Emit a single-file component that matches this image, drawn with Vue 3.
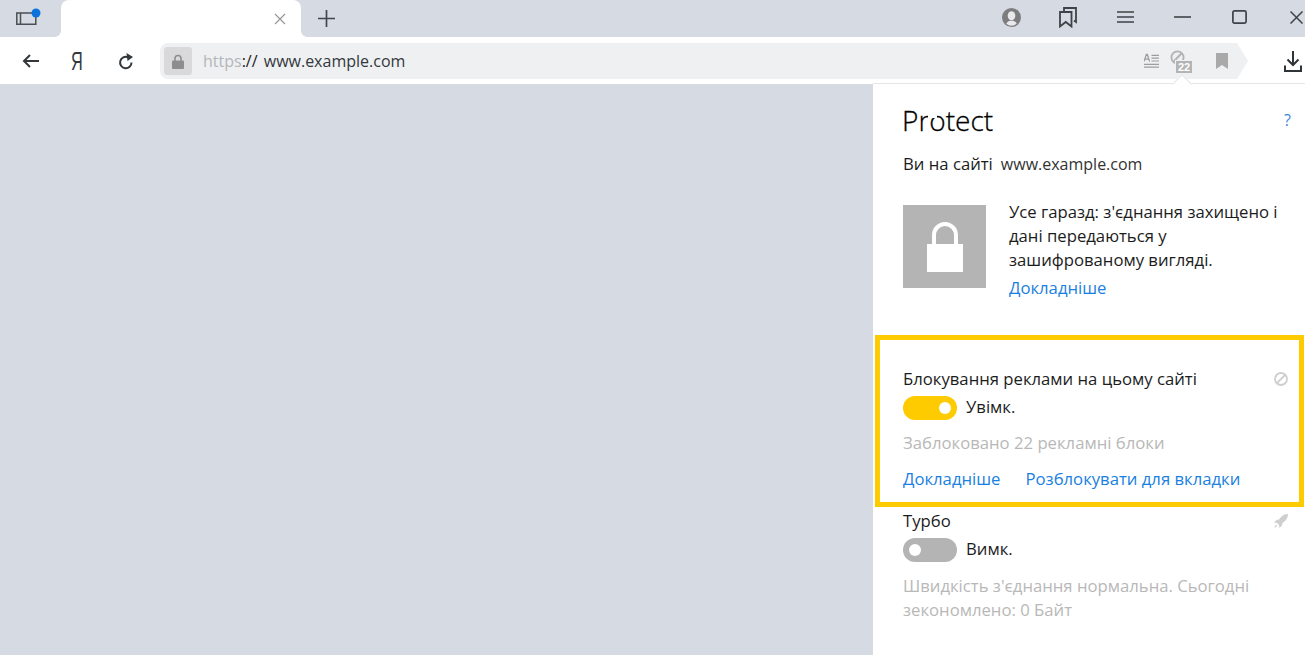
<script setup>
const btnColor = '#4a4f54'
</script>

<template>
  <div class="page">
    <header class="tabbar">
      <button class="tb sidebar" aria-label="sidebar">
        <svg width="26" height="20" viewBox="0 0 26 20"><path d="M1.800 5h19v11.200h-19zM5.500 5v11.200" fill="none" :stroke="btnColor" stroke-width="1.500"/><circle cx="21" cy="5" r="4.500" fill="#0a74dc"/></svg>
      </button>
      <div class="tab">
        <svg class="tab-x" width="12" height="12" viewBox="0 0 12 12"><path d="M1 1l10 10M11 1L1 11" stroke="#9a9a9a" stroke-width="1.300"/></svg>
      </div>
      <button class="tb plus" aria-label="new tab">
        <svg width="17" height="17" viewBox="0 0 17 17"><path d="M8.500 0v17M0 8.500h17" stroke="#42474d" stroke-width="1.700"/></svg>
      </button>
      <div class="spacer"></div>
      <div class="win">
        <svg class="w1" width="19" height="19" viewBox="0 0 20 20"><circle cx="10" cy="10" r="10" fill="#7d7d7f"/><ellipse cx="10" cy="8.200" rx="4" ry="4.800" fill="#e8e9ec"/><path d="M4.500 16.500c1-2.500 3.500-3 5.500-3s4.500.5 5.500 3a9 9 0 0 1-11 0z" fill="#e8e9ec"/></svg>
        <svg class="w2" width="18" height="21" viewBox="0 0 18 21"><path d="M5 4V1h12v14l-2-1.500" fill="none" stroke="#3e4347" stroke-width="1.800"/><path d="M1 5h11.500v14.500L6.750 15 1 19.500z" fill="none" stroke="#3e4347" stroke-width="1.800"/></svg>
        <svg class="w3" width="17" height="12" viewBox="0 0 17 12"><path d="M0 1h17M0 6h17M0 11h17" stroke="#3e4347" stroke-width="1.600"/></svg>
        <svg class="w4" width="17" height="2" viewBox="0 0 17 2"><path d="M0 1h17" stroke="#3e4347" stroke-width="1.600"/></svg>
        <svg class="w5" width="15" height="14" viewBox="0 0 15 14"><rect x=".900" y=".900" width="13.200" height="12.200" rx="1.500" fill="none" stroke="#3e4347" stroke-width="1.700"/></svg>
        <svg class="w6" width="13" height="13" viewBox="0 0 13 13"><path d="M.5.5l12 12M12.500.5l-12 12" stroke="#3e4347" stroke-width="1.500"/></svg>
      </div>
    </header>

    <nav class="toolbar">
      <svg class="back" width="17" height="14" viewBox="0 0 17 14"><path d="M17 7H2M8 1L2 7l6 6" fill="none" stroke="#33383c" stroke-width="2"/></svg>
      <span class="ya">Я</span>
      <svg class="reload" width="16" height="17" viewBox="0 0 16 17"><path d="M13.500 9.500a5.700 5.700 0 1 1-3.500-5.200" fill="none" stroke="#33383c" stroke-width="2"/><path d="M8.500 0l6.500 4-5.500 4z" fill="#33383c"/></svg>
      <div class="urlbar">
        <div class="lockbox">
          <svg width="12" height="15" viewBox="0 0 12 15"><path d="M3 7V4.500a3 3 0 0 1 6 0V7" fill="none" stroke="#8d8d8d" stroke-width="1.600"/><rect y="6.500" width="12" height="8.500" rx="1" fill="#8d8d8d"/></svg>
        </div>
        <div class="url"><span class="scheme">https</span><span class="sep">://</span> www.example.com</div>
        <div class="url-icons">
          <svg class="reader" width="15" height="16" viewBox="0 0 16 16"><path d="M0 8.500 2.500 1h1L6 8.500M1 6h4M8 2h8M8 5h8M8 8h8M0 11.500h16M0 14.500h16" fill="none" stroke="#9d9d9d" stroke-width="1.300"/></svg>
          <div class="adblock">
            <svg width="15" height="15" viewBox="0 0 16 16"><circle cx="8" cy="8" r="6.500" fill="none" stroke="#b4b4b4" stroke-width="2"/><path d="M3.500 12.500l9-9" stroke="#b4b4b4" stroke-width="2"/></svg>
            <span class="count">22</span>
          </div>
          <svg class="bm" width="12" height="16" viewBox="0 0 12 16"><path d="M0 0h12v16l-6-4-6 4z" fill="#a9a9a9"/></svg>
        </div>
      </div>
      <svg class="dl" width="18" height="21" viewBox="0 0 18 21"><path d="M9 0v14M3.500 8.500 9 14l5.500-5.500M1 14.500V20h16v-5.500" fill="none" stroke="#2f3438" stroke-width="2"/></svg>
    </nav>

    <main class="content">
      <div class="blank"></div>
      <aside class="panel">
        <span class="caret"></span>
        <div class="head">
          <span class="logo">Protect</span>
          <a class="help">?</a>
        </div>
        <p class="site"><span class="site-label">Ви на сайті</span><span class="site-url">www.example.com</span></p>
        <section class="secure">
          <div class="lock-tile">
            <svg width="36" height="50" viewBox="0 0 36 50"><path d="M7 24V13a11 11 0 0 1 22 0v11" fill="none" stroke="#fff" stroke-width="4"/><rect y="22" width="36" height="28" fill="#fff"/></svg>
          </div>
          <div class="secure-text">
            <p>Усе гаразд: з'єднання захищено і дані передаються у зашифрованому вигляді.</p>
            <a class="link">Докладніше</a>
          </div>
        </section>
        <section class="adbox">
          <div class="row-title">
            <span>Блокування реклами на цьому сайті</span>
            <svg width="16" height="16" viewBox="0 0 16 16"><circle cx="8" cy="8" r="6" fill="none" stroke="#cfcfcf" stroke-width="1.800"/><path d="M4 12l8-8" stroke="#cfcfcf" stroke-width="1.800"/></svg>
          </div>
          <div class="toggle-row">
            <span class="toggle on"><i></i></span>
            <span class="toggle-label">Увімк.</span>
          </div>
          <p class="muted">Заблоковано 22 рекламні блоки</p>
          <div class="links">
            <a class="link">Докладніше</a>
            <a class="link">Розблокувати для вкладки</a>
          </div>
        </section>
        <section class="turbo">
          <div class="row-title">
            <span>Турбо</span>
            <svg width="16" height="16" viewBox="0 0 16 16"><path d="M15 1c-4 0-7 2-9 5.500L3.500 7 1 9.500l3 .5 2 2 .5 3L9 12.500l.5-2.500C13 8 15 5 15 1zM3 11.500L1 15l3.500-2z" fill="#cfcfcf"/></svg>
          </div>
          <div class="toggle-row">
            <span class="toggle off"><i></i></span>
            <span class="toggle-label">Вимк.</span>
          </div>
          <p class="muted turbo-text">Швидкість з'єднання нормальна. Сьогодні зекономлено: 0 Байт</p>
        </section>
      </aside>
    </main>
  </div>
</template>

<style>
html, body { margin: 0; padding: 0; }
</style>

<style scoped>
.page {
  width: 1305px;
  height: 655px;
  overflow: hidden;
  display: flex;
  flex-direction: column;
  font-family: "Open Sans", "Noto Sans", sans-serif;
  font-size: 16.7px;
  color: #1c1c1c;
  background: #d6dae2;
}
p { margin: 0; }
button { border: 0; background: none; padding: 0; display: flex; }
a { text-decoration: none; }

.tabbar { height: 37px; display: flex; align-items: flex-start; flex: none; }
.tb.sidebar { margin: 8px 0 0 15px; }
.tab {
  width: 240px;
  height: 37px;
  margin-left: 20px;
  background: #fff;
  border-radius: 8px 8px 0 0;
  display: flex;
  justify-content: flex-end;
  align-items: center;
  position: relative;
}
.tab::before, .tab::after {
  content: "";
  position: absolute;
  bottom: 0;
  width: 6px;
  height: 6px;
}
.tab::before { left: -6px; background: radial-gradient(circle at 0 0, transparent 5.500px, #fff 6px); }
.tab::after { right: -6px; background: radial-gradient(circle at 100% 0, transparent 5.500px, #fff 6px); }
.tab-x { margin-right: 15px; }
.tb.plus { margin: 10px 0 0 17px; }
.spacer { flex: 1; }
.win { display: flex; align-items: center; height: 34px; padding-right: 2px; }
.w1 { margin-right: 38px; }
.w2 { margin-right: 40px; }
.w3 { margin-right: 40px; }
.w4 { margin-right: 41px; }
.w5 { margin-right: 43px; }

.toolbar {
  height: 47px;
  box-sizing: border-box;
  padding-top: 1px;
  flex: none;
  background: #fff;
  display: flex;
  align-items: center;
  position: relative;
}
.back { margin-left: 22px; }
.ya {
  margin-left: 32px;
  width: 12px;
  font-size: 25px;
  line-height: 28px;
  color: #33383c;
  font-family: "Liberation Sans", sans-serif;
  transform: scaleX(.65);
  transform-origin: left center;
}
.reload { margin-left: 35px; }
.urlbar {
  margin-left: 26px;
  width: 1077px;
  height: 36px;
  background: #eff0f2;
  border-radius: 8px 0 0 8px;
  display: flex;
  align-items: center;
  position: relative;
}
.urlbar::after {
  content: "";
  position: absolute;
  left: 100%;
  top: 0;
  border-left: 11px solid #eff0f2;
  border-top: 18px solid transparent;
  border-bottom: 18px solid transparent;
}
.lockbox {
  width: 28px;
  height: 28px;
  margin-left: 4px;
  background: #d9d9db;
  border-radius: 3px;
  display: flex;
  align-items: center;
  justify-content: center;
}
.url { margin-left: 11px; font-size: 16px; color: #33383c; }
.scheme { color: #b3b6ba; }
.sep { color: #222; margin-right: 2px; }
.url-icons { margin-left: auto; display: flex; align-items: center; }
.reader { margin-right: 11px; }
.adblock { position: relative; width: 24px; height: 30px; margin-right: 22px; }
.adblock svg { position: absolute; left: 0; top: 4px; }
.count {
  position: absolute;
  left: 5px;
  top: 14px;
  width: 16px;
  height: 12px;
  background: #b4b4b4;
  border: 1px solid #eff0f2;
  font: bold 11px/12px "Liberation Sans", sans-serif;
  color: #fff;
  text-align: center;
}
.bm { margin-right: 9px; }
.dl { margin-left: 47px; }

.content { flex: 1; display: flex; min-height: 0; }
.blank { flex: 1; }
.panel {
  width: 432px;
  flex: none;
  background: #fff;
  position: relative;
  box-shadow: 0 -1px 0 #e5e6e8;
}
.caret {
  position: absolute;
  top: -7px;
  left: 302px;
  width: 14px;
  height: 14px;
  box-sizing: border-box;
  background: #fff;
  border-top: 1px solid #e5e6e8;
  border-left: 1px solid #e5e6e8;
  transform: rotate(45deg);
}
.head {
  display: flex;
  align-items: center;
  justify-content: space-between;
  padding: 18px 14px 0 29px;
  height: 36px;
}
.logo {
  font-size: 28px;
  line-height: 36px;
  color: #000;
  font-weight: 300;
  position: relative;
  -webkit-text-stroke: 0.3px #000;
}
.logo::after {
  content: "";
  position: absolute;
  left: 26px;
  top: 11px;
  width: 9px;
  height: 5px;
  background: #fff;
}
.help { color: #3b87e0; font-size: 16px; }
.site { margin-top: 14px; padding-left: 30px; line-height: 24px; }
.site-url { margin-left: 8px; color: #333; font-size: 16px; }
.secure { display: flex; margin-top: 29px; padding-left: 30px; }
.lock-tile {
  width: 83px;
  height: 83px;
  background: #b4b4b4;
  display: flex;
  align-items: center;
  justify-content: center;
  flex: none;
}
.secure-text { width: 274px; margin-left: 23px; line-height: 24px; margin-top: -5px; }
.secure-text .link { display: block; margin-top: 4px; }
.link { color: #1a7fe0; }
.adbox {
  margin: 35px 1px 0 2px;
  height: 172px;
  box-sizing: border-box;
  border: 5px solid #fdcb00;
  padding: 27px 10px 0 23px;
}
.row-title { display: flex; align-items: center; justify-content: space-between; line-height: 24px; }
.toggle-row { display: flex; align-items: center; gap: 9px; margin-top: 4px; line-height: 24px; }
.toggle-label { padding-bottom: 2px; }
.toggle {
  width: 54px;
  height: 24px;
  border-radius: 12px;
  position: relative;
  display: block;
}
.toggle i {
  position: absolute;
  top: 6px;
  width: 12px;
  height: 12px;
  border-radius: 50%;
  background: #fff;
}
.toggle.on { background: #fdcb00; }
.toggle.on i { right: 6px; }
.toggle.off { background: #b4b4b4; }
.toggle.off i { left: 6px; }
.muted { color: #b8b8b8; margin-top: 10px; line-height: 24px; }
.links { display: flex; gap: 25px; margin-top: 12px; line-height: 24px; }
.turbo { padding: 2px 16px 0 30px; }
.turbo-text { width: 370px; margin-top: 11px; }
</style>
